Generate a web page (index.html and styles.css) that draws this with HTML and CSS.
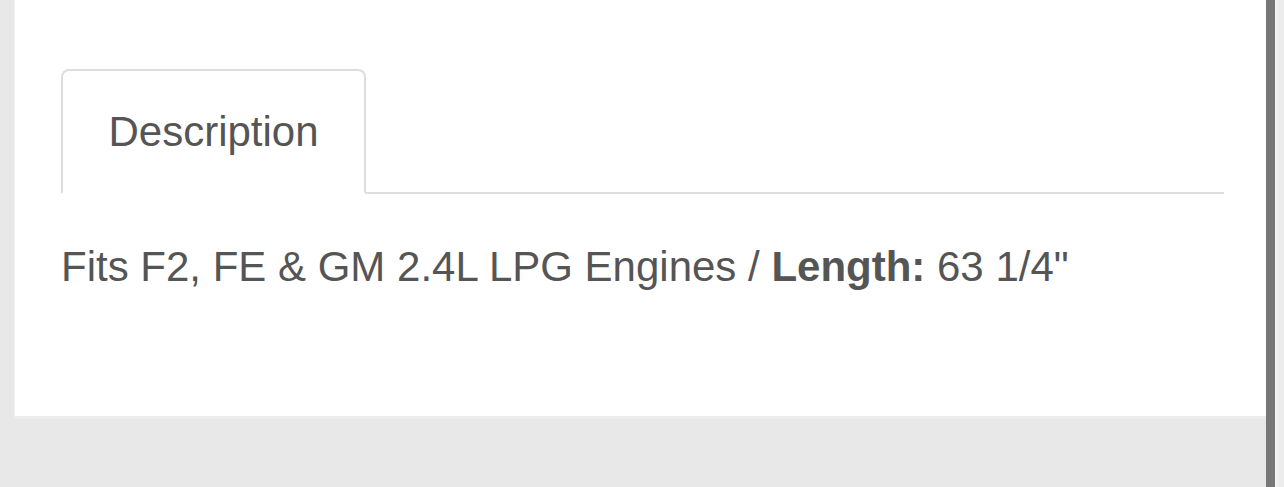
FILE: index.html
```html
<!DOCTYPE html>
<html>
<head>
<meta charset="utf-8">
<link rel="stylesheet" href="styles.css">
</head>
<body>
<div class="page">
  <div class="panel">
    <div class="tabs">
      <div class="tab">Description</div>
    </div>
    <p class="desc">Fits F2, FE &amp; GM 2.4L LPG Engines / <strong>Length:</strong> 63 1/4"</p>
  </div>
  <div class="scroll-dark"></div>
  <div class="scroll-light"></div>
</div>
</body>
</html>
```
FILE: styles.css
```css
html, body {
  margin: 0;
  padding: 0;
}
body {
  background: #e8e8e8;
  font-family: "Liberation Sans", Arial, sans-serif;
  color: #555;
}
.page {
  display: flex;
  align-items: flex-start;
  height: 487px;
  overflow: hidden;
}
.panel {
  box-sizing: border-box;
  width: 1252px;
  margin-left: 14px;
  height: 419px;
  background: #fff;
  border-left: 1px solid #f1f1f1;
  border-bottom: 3px solid #ececec;
  padding: 69px 42px 0 46px;
}
.tabs {
  display: flex;
  border-bottom: 2px solid #dddddd;
}
.tab {
  width: 305px;
  box-sizing: border-box;
  border: 2px solid #dddddd;
  border-bottom: 2px solid #fff;
  border-radius: 8px 8px 0 0;
  margin-bottom: -2px;
  padding: 37px 0 36px;
  text-align: center;
  font-size: 42px;
  line-height: 48px;
  color: #555;
}
.desc {
  margin: 49px 0 0;
  font-size: 42px;
  line-height: 48px;
  color: #555;
}
.desc strong {
  font-weight: bold;
}
.scroll-dark {
  width: 9px;
  height: 487px;
  background: #777;
}
.scroll-light {
  flex: 1;
  height: 487px;
  background: #ececec;
  border-left: 2px solid #f4f4f4;
}
```
